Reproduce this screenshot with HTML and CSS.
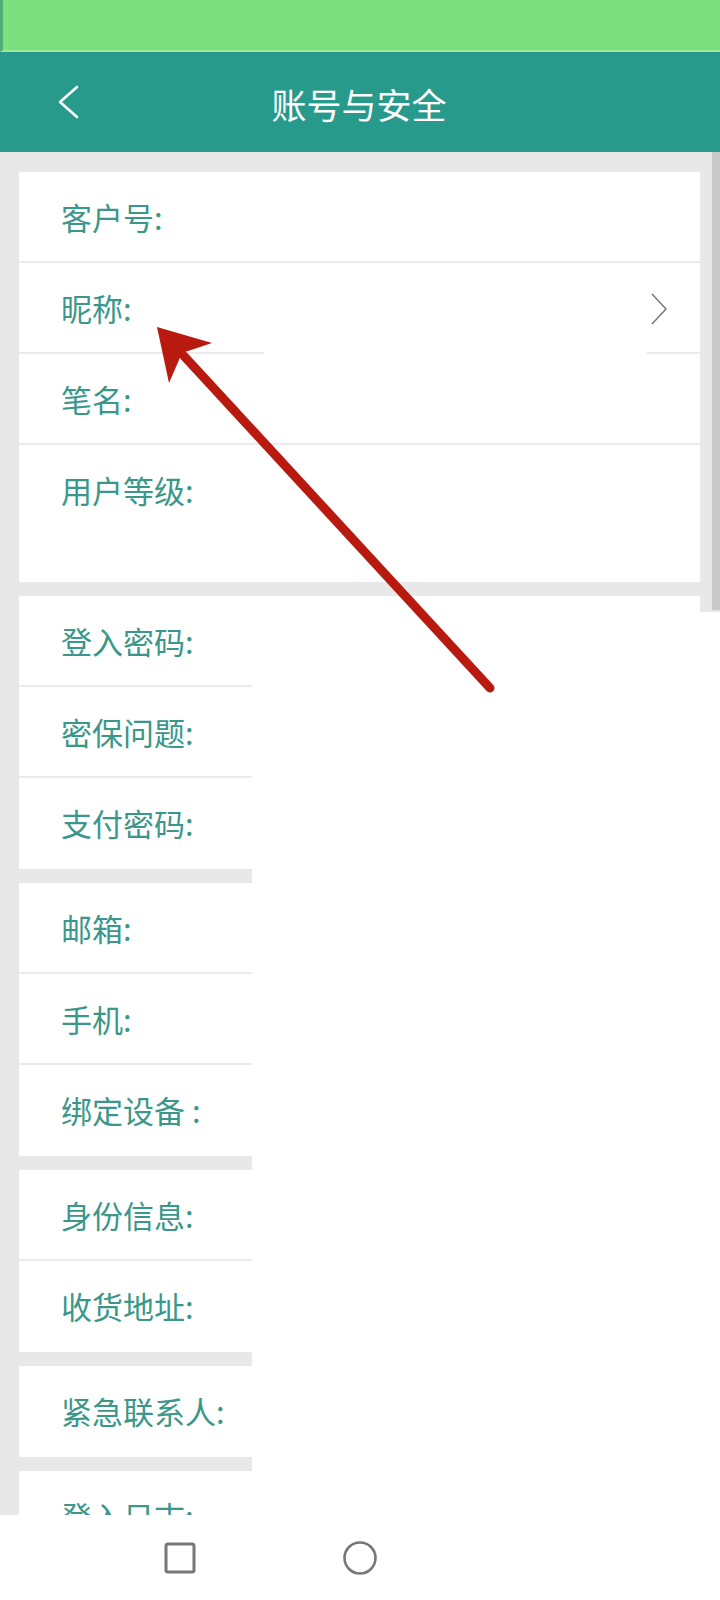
FILE: index.html
```html
<!DOCTYPE html>
<html lang="zh-CN">
<head>
    <meta charset="UTF-8">
    <meta name="viewport" content="width=device-width, initial-scale=1.0">
    <title>账号与安全</title>
    <link rel="stylesheet" href="styles.css">
</head>

<body>
    <div class="status-bar"></div>

    <header class="top-bar">
        <a href="#" class="back-btn">
            <svg width="24" height="36" viewBox="0 0 24 36">
                <polyline points="20,3 3,18 20,33" fill="none" stroke="#fff" stroke-width="2.6" stroke-linecap="round" stroke-linejoin="round"/>
            </svg>
        </a>
        <h1>账号与安全</h1>
    </header>

    <main class="content">
        <section class="card">
            <div class="row">客户号:</div>
            <div class="row row-link" id="nickname-row">
                <span>昵称:</span>
                <svg class="arrow-right" width="18" height="32" viewBox="0 0 18 32">
                    <polyline points="2,1 16,16 2,31" fill="none" stroke="#777" stroke-width="1.5"/>
                </svg>
            </div>
            <div class="row">笔名:</div>
            <div class="row row-tall">用户等级:</div>
        </section>

        <section class="card">
            <div class="row">登入密码:</div>
            <div class="row">密保问题:</div>
            <div class="row">支付密码:</div>
        </section>

        <section class="card">
            <div class="row">邮箱:</div>
            <div class="row">手机:</div>
            <div class="row">绑定设备 :</div>
        </section>

        <section class="card">
            <div class="row">身份信息:</div>
            <div class="row">收货地址:</div>
        </section>

        <section class="card">
            <div class="row">紧急联系人:</div>
        </section>

        <section class="card">
            <div class="row">登入日志:</div>
        </section>
    </main>

    <nav class="nav-bar">
        <div class="nav-item">
            <svg width="32" height="32" viewBox="0 0 32 32">
                <rect x="2" y="2" width="28" height="28" rx="2" fill="none" stroke="#777" stroke-width="3"/>
            </svg>
        </div>
        <div class="nav-item">
            <svg width="36" height="36" viewBox="0 0 36 36">
                <circle cx="18" cy="18" r="15.5" fill="none" stroke="#777" stroke-width="2.6"/>
            </svg>
        </div>
        <div class="nav-item"></div>
    </nav>

    <!-- things drawn over the page -->
    <div class="scroll-thumb"></div>
    <div class="blank-area"></div>

    <svg class="annotation" width="720" height="1600" viewBox="0 0 720 1600">
        <line x1="490" y1="688" x2="184" y2="356" stroke="#b81a0f" stroke-width="9" stroke-linecap="round"/>
        <polygon points="157,327 212,343 182,353 169,383" fill="#b81a0f"/>
    </svg>
</body>
</html>
```

FILE: styles.css
```css
body {
    margin: 0;
    width: 720px;
    height: 1600px;
    overflow: hidden;
    position: relative;
    display: flex;
    flex-direction: column;
    font-family: "Noto Sans CJK SC", "Noto Sans", sans-serif;
    background: #fff;
}

.status-bar {
    height: 50px;
    flex-shrink: 0;
    background: #7de07f;
    border-left: 3px solid #4fae77;
    border-bottom: 2px solid #9ce89d;
}

.top-bar {
    height: 100px;
    flex-shrink: 0;
    background: #279a8c;
    display: flex;
    align-items: center;
    justify-content: center;
    position: relative;
}

.back-btn {
    position: absolute;
    left: 57px;
    top: 32px;
    display: block;
}

.top-bar h1 {
    margin: 2px 0 0 -2px;
    color: #fff;
    font-size: 35px;
    font-weight: normal;
}

.content {
    flex: 1;
    overflow: hidden;
    background: #e8e8e8;
    padding-top: 20px;
}

.card {
    background: #fff;
    margin: 0 20px 14px 19px;
}

.row {
    height: 91px;
    box-sizing: border-box;
    padding: 23px 0 0 42px;
    font-size: 31px;
    line-height: 44px;
    color: #3a978a;
    border-bottom: 2px solid #ebebeb;
    display: flex;
    justify-content: space-between;
}

.row:last-child {
    border-bottom: none;
}

.row-tall {
    height: 137px;
}

.row-link {
    position: relative;
}

.row-link .arrow-right {
    margin: 7px 32px 0 0;
}

/* the separator under this row is broken in the middle */
.row-link::after {
    content: "";
    position: absolute;
    left: 245px;
    right: 53px;
    bottom: -2px;
    height: 2px;
    background: #fff;
}

.nav-bar {
    height: 85px;
    flex-shrink: 0;
    background: #fff;
    display: grid;
    grid-template-columns: repeat(3, 180px);
    padding: 0 90px;
    align-items: center;
    justify-items: center;
}

.nav-item {
    display: flex;
    align-items: center;
    justify-content: center;
}

.scroll-thumb {
    position: absolute;
    left: 712px;
    top: 152px;
    width: 8px;
    height: 458px;
    background: #c9c9c9;
}

.blank-area {
    position: absolute;
    left: 252px;
    top: 612px;
    right: 0;
    height: 903px;
    background: #fff;
}

.annotation {
    position: absolute;
    left: 0;
    top: 0;
    pointer-events: none;
}
```
